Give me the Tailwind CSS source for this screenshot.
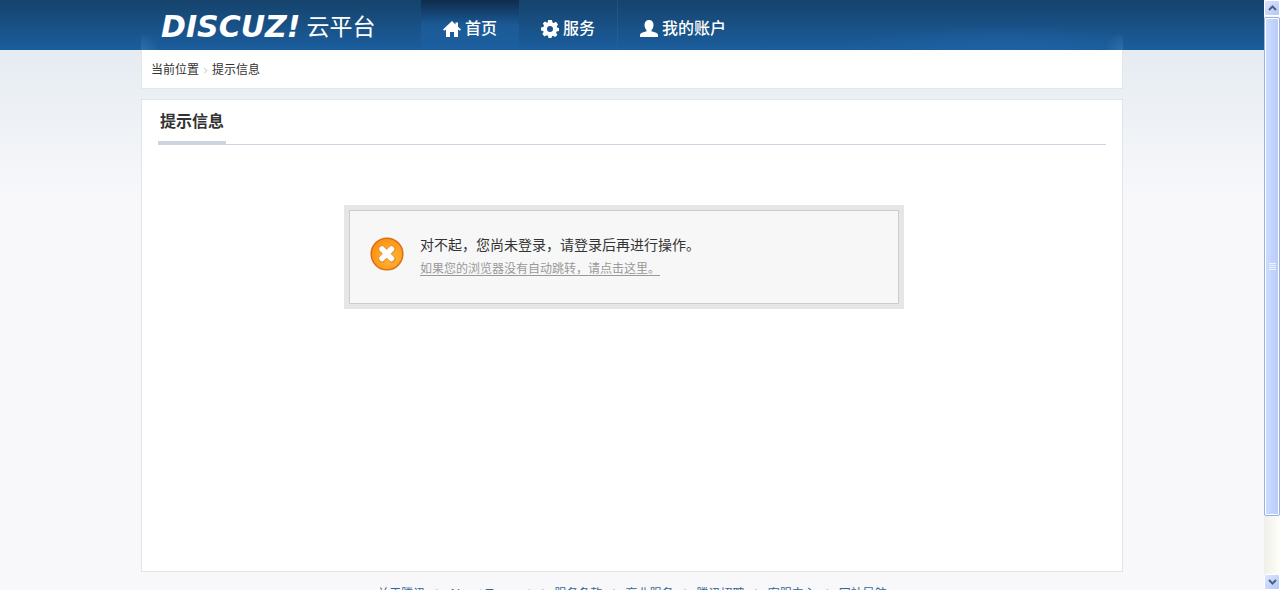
<!DOCTYPE html>
<html lang="zh-CN">
<head>
<meta charset="utf-8">
<title>提示信息 - Discuz! 云平台</title>
<script src="https://cdn.jsdelivr.net/npm/@tailwindcss/browser@4"></script>
</head>
<body class="flex h-screen overflow-hidden bg-[#f8f8fb] font-['Liberation_Sans','Noto_Sans_CJK_SC',sans-serif] text-xs text-[#333]">
<div class="min-w-0 flex-1 bg-linear-to-b from-[#dfe8ee] to-[#f8f8fb] to-[200px]">
  <header class="h-[50px] bg-linear-to-b from-[#15436c] to-[#1b5e9e]">
    <div class="mx-auto flex h-full max-w-[982px] bg-[radial-gradient(circle_at_0%_100%,#2f6da5,transparent_18px),radial-gradient(circle_at_100%_100%,#2f6da5,transparent_18px),radial-gradient(ellipse_160px_24px_at_88%_100%,#1f61a3,transparent)]">
      <a href="#" class="flex w-[280px] shrink-0 items-center gap-1.5 pt-1 pl-5 whitespace-nowrap text-white">
        <span class="font-['DejaVu_Sans',sans-serif] text-3xl leading-none font-bold italic">DISCUZ!</span>
        <span class="text-[23px] leading-none">云平台</span>
      </a>
      <nav class="flex text-base font-medium text-white">
        <a href="#" class="flex w-[98px] items-center justify-center gap-1 bg-linear-to-b from-[#0e2c4c] via-[#1b5a96] via-50% to-[#1c5f9f] pt-2">
          <svg class="size-[18px]" viewBox="0 0 18 18" fill="currentColor"><path d="M9 1 0 9.500l1.200 1.300L3 9.500V17h4v-5h4v5h4V9.500l1.800 1.300L18 9.500l-3-2.800V2.500h-2.500v2z"/></svg>首页</a>
        <a href="#" class="flex w-[99px] items-center justify-center gap-1 border-r border-[#286aa6]/40 pt-2">
          <svg class="size-[18px]" viewBox="0 0 18 18" fill="currentColor" fill-rule="evenodd"><path d="M7 0h4l.5 2.500 1.300.6L15 1.800 17 4.500l-1.300 2 .4 1.100 1.900.4v3l-2.300.6-.6 1.200 1.300 2.200-2.300 2-2.200-1.300-1 .5L10.500 18h-3L7 15.800l-1.300-.6L3.500 16.500 1.300 14l1.300-2-.4-1.100L0 10.500v-3L2.400 7 3 5.600 1.800 3.500 4 1.500l2 1.200.7-.3zM9 6a3 3 0 1 0 0 6 3 3 0 0 0 0-6z"/></svg>服务</a>
        <a href="#" class="flex w-[130px] items-center justify-center gap-1 pt-2">
          <svg class="size-[18px]" viewBox="0 0 18 18" fill="currentColor"><path d="M9 0c3 0 4.500 2 4.500 5 0 2.500-1 4-2 5v1.200l4.700 1.500c1 .4 1.800 1.300 1.800 2.300v2H0v-2c0-1 .8-1.900 1.800-2.300l4.700-1.500V10c-1-1-2-2.500-2-5 0-3 1.500-5 4.500-5z"/></svg>我的账户</a>
      </nav>
    </div>
  </header>
  <div class="mx-auto max-w-[982px]">
    <div class="flex h-[39px] items-center gap-1 border border-t-0 border-[#e1e7ec] bg-white px-[9px] pt-[2px]">
      <a href="#">当前位置</a>
      <svg class="h-[7px] w-[5px]" viewBox="0 0 5 8" fill="none" stroke="#d8d8d8" stroke-width="1.500"><path d="m1 1 3 3-3 3"/></svg>
      <span>提示信息</span>
    </div>
    <main class="mt-[10px] h-[473px] border border-[#e1e4e9] bg-white px-4">
      <div class="flex h-[45px] border-b border-[#cdd3df]">
        <h1 class="-mb-px border-b-4 border-[#cdd3df] px-[2px] pt-[10px] text-base font-bold">提示信息</h1>
      </div>
      <section class="mx-auto mt-[60px] max-w-[560px] -translate-x-2 border-5 border-[#e6e6e6]">
        <div class="flex gap-4 border border-[#ccc] bg-[#f7f7f7] py-[25px] pl-5">
          <svg class="mt-px size-[34px]" viewBox="0 0 34 34"><defs><radialGradient id="o" cx=".6" cy=".6" r=".7"><stop stop-color="#ffb83c"/><stop offset="1" stop-color="#fb8d0d"/></radialGradient></defs><circle cx="17" cy="17" r="15.800" fill="url(#o)" stroke="#dc6e14" stroke-width="1.500"/><path d="m12 12 10 10M22 12 12 22" stroke="#e58a22" stroke-width="7" stroke-linecap="round"/><path d="m12 12 9.500 9.500M21.500 12 12 21.500" stroke="#fff" stroke-width="5.500" stroke-linecap="round"/></svg>
          <div>
            <p class="text-sm leading-[18px]">对不起，您尚未登录，请登录后再进行操作。</p>
            <a href="#" class="mt-[6px] block leading-[18px] text-[#999] underline underline-offset-2">如果您的浏览器没有自动跳转，请点击这里。</a>
          </div>
        </div>
      </section>
    </main>
    <footer class="mt-[14px] flex justify-center gap-[10px] leading-4 whitespace-nowrap text-[#336699]">
      <a href="#">关于腾讯</a><span class="text-[#aaa]">|</span>
      <a href="#" class="text-[13px] leading-4">About Tencent</a><span class="text-[#aaa]">|</span>
      <a href="#">服务条款</a><span class="text-[#aaa]">|</span>
      <a href="#">商业服务</a><span class="text-[#aaa]">|</span>
      <a href="#">腾讯招聘</a><span class="text-[#aaa]">|</span>
      <a href="#">客服中心</a><span class="text-[#aaa]">|</span>
      <a href="#">网站导航</a>
    </footer>
  </div>
</div>
<div class="flex w-4 shrink-0 flex-col bg-linear-to-r from-[#f0f0ea] to-[#fefefa]">
  <button aria-label="向上滚动" class="flex h-4 items-center justify-center rounded-xs border border-white bg-linear-to-br from-[#dbe5ff] to-[#b4c8f6]"><svg class="h-[6px] w-[9px]" viewBox="0 0 9 6" fill="none" stroke="#4d6185" stroke-width="2"><path d="m1 5 3.500-3.500L8 5"/></svg></button>
  <button aria-label="滚动滑块" class="mt-px flex h-[499px] flex-col items-center justify-center gap-px rounded-xs border border-[#98b0e4] bg-linear-to-r from-[#cddbff] to-[#b8cbf9] inset-ring inset-ring-white"><span class="h-px w-[7px] bg-[#eef4fe]"></span><span class="h-px w-[7px] bg-[#eef4fe]"></span><span class="h-px w-[7px] bg-[#eef4fe]"></span><span class="h-px w-[7px] bg-[#eef4fe]"></span></button>
  <button aria-label="向下滚动" class="mt-auto flex h-4 items-center justify-center rounded-xs border border-white bg-linear-to-br from-[#dbe5ff] to-[#b4c8f6]"><svg class="h-[6px] w-[9px]" viewBox="0 0 9 6" fill="none" stroke="#4d6185" stroke-width="2"><path d="m1 1 3.500 3.500L8 1"/></svg></button>
</div>
</body>
</html>
